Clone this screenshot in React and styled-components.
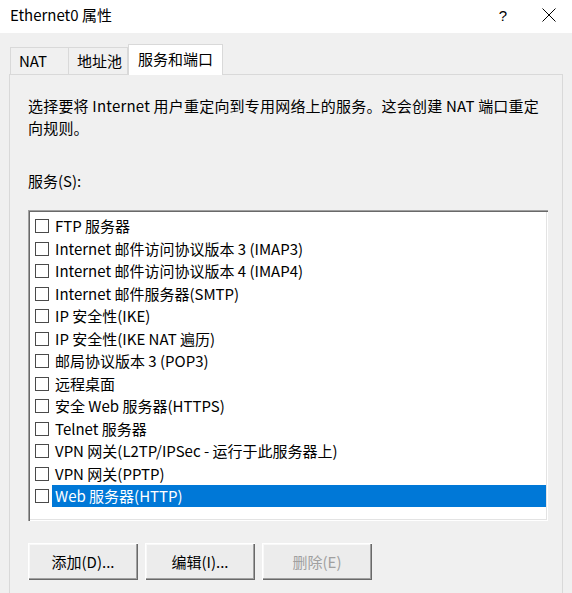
import React from "react";
import styled, { createGlobalStyle } from "styled-components";

const Global = createGlobalStyle`
  html, body { margin: 0; padding: 0; background: #f0f0f0; }
  body {
    font-family: "Noto Sans CJK SC", "Noto Sans", sans-serif;
    font-size: 15px;
    color: #000;
  }
  * { box-sizing: border-box; }
`;

const Window = styled.div`
  width: 572px;
  height: 593px;
  overflow: hidden;
  background: #f0f0f0;
  display: flex;
  flex-direction: column;
`;

const TitleBar = styled.div`
  height: 33px;
  flex: none;
  background: #fff;
  display: flex;
  align-items: center;
  padding-left: 10px;
`;

const Title = styled.div`
  flex: 1;
  line-height: 20px;
  margin-top: -3px;
`;

const TitleButton = styled.div`
  width: ${(p) => p.$w}px;
  height: 33px;
  display: flex;
  align-items: center;
  justify-content: center;
  font-family: "Segoe UI", "Liberation Sans", sans-serif;
  font-size: 15px;
  margin-top: -3px;
`;

const Body = styled.div`
  padding: 12px 9px 0 9px;
  display: flex;
  flex-direction: column;
  flex: 1;
`;

const TabStrip = styled.div`
  display: flex;
  align-items: flex-end;
  height: 30px;
  padding-left: 1px;
  margin-bottom: -1px;
  position: relative;
  z-index: 1;
`;

const Tab = styled.div`
  width: ${(p) => p.$w}px;
  height: ${(p) => (p.$active ? 31 : 28)}px;
  padding-left: ${(p) => (p.$active ? 9 : 8)}px;
  border: 1px solid #d9d9d9;
  border-bottom: ${(p) => (p.$active ? "none" : "1px solid #d9d9d9")};
  border-left: ${(p) => (p.$first || p.$active ? "1px solid #d9d9d9" : "none")};
  background: ${(p) => (p.$active ? "#ffffff" : "#f0f0f0")};
  display: flex;
  align-items: center;
  line-height: 20px;
  padding-bottom: ${(p) => (p.$active ? 2 : 0)}px;
`;

const Panel = styled.div`
  flex: 1;
  border: 1px solid #d9d9d9;
  border-bottom: none;
  background: #f0f0f0;
  padding: 20px 14px 0 18px;
  display: flex;
  flex-direction: column;
`;

const Description = styled.div`
  line-height: 22px;
  white-space: nowrap;
  letter-spacing: 0.2px;
  margin-bottom: 31px;
`;

const Label = styled.div`
  line-height: 22px;
  margin-bottom: 18px;
`;

const ListBox = styled.div`
  width: 520px;
  height: 311px;
  background: #fff;
  padding: 5px 0 0 0;
  box-shadow: inset 1px 1px #a0a0a0, inset 2px 2px #696969,
    inset -1px -1px #ffffff, inset -2px -2px #e3e3e3;
  display: flex;
  flex-direction: column;
`;

const Row = styled.div`
  height: 22.5px;
  display: flex;
  align-items: center;
  padding-left: 7px;
  padding-right: 2px;
`;

const Check = styled.span`
  width: 14px;
  height: 14px;
  flex: none;
  border: 1px solid #4a4a4a;
  background: #fff;
  margin-right: 3px;
`;

const ItemText = styled.span`
  flex: 1;
  height: 22px;
  line-height: 22px;
  padding-left: 3px;
  white-space: nowrap;
  background: ${(p) => (p.$selected ? "#0078d7" : "transparent")};
  color: ${(p) => (p.$selected ? "#fff" : "#000")};
`;

const ButtonRow = styled.div`
  display: flex;
  gap: 7px;
  margin-top: 22px;
`;

const Button = styled.div`
  width: 110px;
  height: 37px;
  display: flex;
  align-items: center;
  justify-content: center;
  background: #ececec;
  color: ${(p) => (p.$disabled ? "#a0a0a0" : "#000")};
  box-shadow: inset 1px 1px #ffffff, inset -1px -1px #696969,
    inset -2px -2px #a0a0a0, inset 2px 2px #f8f8f8;
  line-height: 20px;
`;

const items = [
  "FTP 服务器",
  "Internet 邮件访问协议版本 3 (IMAP3)",
  "Internet 邮件访问协议版本 4 (IMAP4)",
  "Internet 邮件服务器(SMTP)",
  "IP 安全性(IKE)",
  "IP 安全性(IKE NAT 遍历)",
  "邮局协议版本 3 (POP3)",
  "远程桌面",
  "安全 Web 服务器(HTTPS)",
  "Telnet 服务器",
  "VPN 网关(L2TP/IPSec - 运行于此服务器上)",
  "VPN 网关(PPTP)",
  "Web 服务器(HTTP)",
];

export default function App() {
  return (
    <>
      <Global />
      <Window>
        <TitleBar>
          <Title>Ethernet0 属性</Title>
          <TitleButton $w={46}>?</TitleButton>
          <TitleButton $w={46}>
            <svg width="14" height="14" viewBox="0 0 14 14">
              <path d="M0.5 0.5 L13.5 13.5 M13.5 0.5 L0.5 13.5" stroke="#000" strokeWidth="1" fill="none" />
            </svg>
          </TitleButton>
        </TitleBar>
        <Body>
          <TabStrip>
            <Tab $w={59} $first>NAT</Tab>
            <Tab $w={59}>地址池</Tab>
            <Tab $w={95} $active>服务和端口</Tab>
          </TabStrip>
          <Panel>
            <Description>
              选择要将 Internet 用户重定向到专用网络上的服务。这会创建 NAT 端口重定
              <br />
              向规则。
            </Description>
            <Label>服务(S):</Label>
            <ListBox>
              {items.map((t, i) => (
                <Row key={t}>
                  <Check />
                  <ItemText $selected={i === items.length - 1}>{t}</ItemText>
                </Row>
              ))}
            </ListBox>
            <ButtonRow>
              <Button>添加(D)...</Button>
              <Button>编辑(I)...</Button>
              <Button $disabled>删除(E)</Button>
            </ButtonRow>
          </Panel>
        </Body>
      </Window>
    </>
  );
}
